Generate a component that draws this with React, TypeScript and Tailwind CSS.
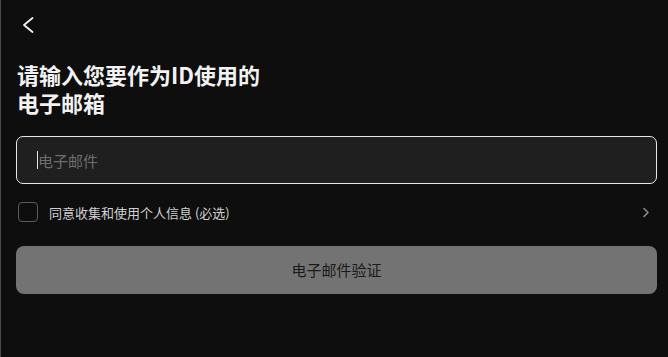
import React from "react";

export default function App() {
  return (
    <div
      className="w-[668px] h-[357px] bg-[#0e0e0e] border-l border-[#4a4a4a] overflow-hidden pl-[15px] pr-[11px]"
      style={{ fontFamily: '"Noto Sans CJK SC", "Noto Sans", sans-serif' }}
    >
      <div className="h-[50px] flex items-center">
        <svg width="14" height="18" viewBox="0 0 14 18" className="ml-[6px] mb-[1px]">
          <polyline points="10.5,2 2,9 10.5,16" fill="none" stroke="#f2f2f2" strokeWidth="1.8" strokeLinecap="round" strokeLinejoin="round" />
        </svg>
      </div>
      <h1 className="mt-[10px] text-[22px] leading-[28px] font-bold text-[#f2f2f2] pl-[1px]">
        请输入您要作为ID使用的
        <br />
        电子邮箱
      </h1>
      <div className="mt-[20px] h-[48px] rounded-[7px] border border-[#e6e6e6] bg-[#1f1f1f] flex items-center pl-[20px]">
        <div className="w-[1px] h-[18px] bg-[#e6e6e6]" />
        <span className="text-[15px] text-[#6e6e6e] leading-none">电子邮件</span>
      </div>
      <div className="mt-[18px] h-[20px] flex items-center">
        <div className="ml-[2px] w-[20px] h-[20px] rounded-[4px] border border-[#5a5a5a]" />
        <span className="ml-[11px] text-[13px] text-[#d0d0d0] leading-none">同意收集和使用个人信息 (必选)</span>
        <svg width="8" height="11" viewBox="0 0 8 11" className="ml-auto mr-[7px]">
          <polyline points="2,1.5 6,5.5 2,9.5" fill="none" stroke="#8a8a8a" strokeWidth="1.6" strokeLinecap="round" strokeLinejoin="round" />
        </svg>
      </div>
      <button className="mt-[24px] w-full h-[48px] rounded-[8px] bg-[#737373] flex items-center justify-center text-[15px] text-[#1a1a1a]">
        电子邮件验证
      </button>
    </div>
  );
}
